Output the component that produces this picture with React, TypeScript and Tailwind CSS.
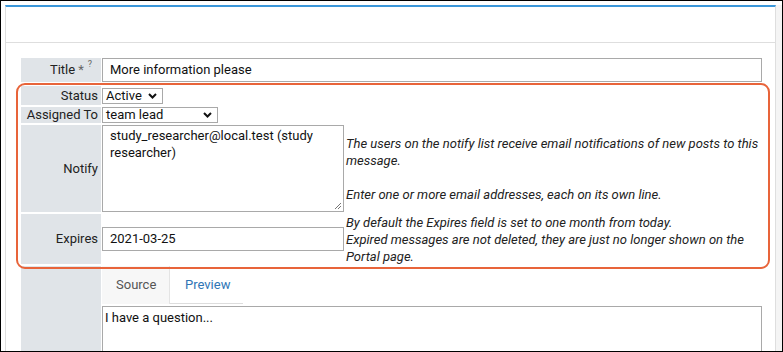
import { ReactNode } from 'react'

const Chevron = () => (
  <svg width="9" height="6" viewBox="0 0 9 6" className="shrink-0">
    <path d="M1 1 L4.5 4.5 L8 1" fill="none" stroke="#111" strokeWidth="2" />
  </svg>
)

const Select = ({ value, width }: { value: string; width: string }) => (
  <div
    className={`flex items-center justify-between h-[16px] border border-[#a9a9a9] bg-white pl-[3px] pr-[5px] ${width}`}
  >
    <span className="leading-[14px] text-[#111]">{value}</span>
    <Chevron />
  </div>
)

const Label = ({ children, className = '' }: { children: ReactNode; className?: string }) => (
  <div
    className={`w-[80px] shrink-0 bg-[#e0e4e8] flex items-center justify-end pr-[3px] text-[#222] ${className}`}
  >
    {children}
  </div>
)

export default function App() {
  return (
    <div
      className="relative w-[783px] h-[352px] overflow-hidden border border-black bg-white text-[13px]"
      style={{ fontFamily: 'Roboto, "Liberation Sans", sans-serif' }}
    >
      <div className="flex h-full pt-[4px] pl-[4px]">
        <div className="w-[771px] shrink-0 border-t-2 border-t-[#3a97da] border-x border-x-[#dedede]">
          <div className="h-[36px] border-b border-[#dedede]" />

          <div className="pl-[15px] pt-[15px] flex flex-col">
            {/* Title */}
            <div className="flex h-[24px] gap-[1px]">
              <Label className="pr-[9px]">
                <span>Title</span>
                <span className="ml-[3px] text-[#666]">*</span>
                <sup className="ml-[4px] text-[9px] text-[#666] -mt-[4px]">?</sup>
              </Label>
              <div className="w-[660px] border border-[#a9a9a9] flex items-center pl-[7px] text-[#111]">
                More information please
              </div>
            </div>

            {/* Status */}
            <div className="flex h-[19px] gap-[1px] mt-[4px]">
              <Label>Status</Label>
              <div className="flex items-end pb-[1px]">
                <Select value="Active" width="w-[61px]" />
              </div>
            </div>

            {/* Assigned To */}
            <div className="flex h-[16px] gap-[1px] mt-[2px]">
              <Label>Assigned To</Label>
              <Select value="team lead" width="w-[116px]" />
            </div>

            {/* Notify */}
            <div className="flex h-[87px] gap-[1px] mt-[2px]">
              <Label>Notify</Label>
              <div className="relative w-[242px] shrink-0 border border-[#a9a9a9] pl-[7px] pt-[1px] leading-[17px] text-[#111]">
                study_researcher@local.test (study researcher)
                <svg width="9" height="9" viewBox="0 0 9 9" className="absolute right-[1px] bottom-[1px]">
                  <path d="M8 2 L2 8 M8 5 L5 8" stroke="#777" strokeWidth="1" />
                </svg>
              </div>
              <div className="flex items-center italic text-[#222] leading-[17px] pl-[1px]">
                <div>
                  <div>The users on the notify list receive email notifications of new posts to this</div>
                  <div>message.</div>
                  <div>&nbsp;</div>
                  <div>Enter one or more email addresses, each on its own line.</div>
                </div>
              </div>
            </div>

            {/* Expires */}
            <div className="flex h-[50px] gap-[1px] mt-[2px]">
              <Label>Expires</Label>
              <div className="flex items-center">
                <div className="w-[242px] h-[24px] border border-[#a9a9a9] flex items-center pl-[7px] text-[#111]">
                  2021-03-25
                </div>
              </div>
              <div className="flex items-center italic text-[#222] leading-[17px] pl-[1px]">
                <div>
                  <div>By default the Expires field is set to one month from today.</div>
                  <div>Expired messages are not deleted, they are just no longer shown on the</div>
                  <div>Portal page.</div>
                </div>
              </div>
            </div>

            {/* Body */}
            <div className="flex gap-[1px] mt-[2px] h-[120px]">
              <div className="w-[80px] shrink-0 bg-[#e0e4e8]" />
              <div className="flex flex-col">
                <div className="flex h-[38px]">
                  <div className="w-[68px] bg-[#f7f7f7] border-r border-[#e4e4e4] flex items-center pl-[14px] text-[#555]">
                    Source
                  </div>
                  <div className="w-[73px] border-b border-[#dddddd] flex items-center pl-[15px] text-[#2f76b6]">
                    Preview
                  </div>
                </div>
                <div className="w-[660px] h-[80px] mt-[2px] border border-[#a9a9a9] pl-[2px] pt-[2px] leading-[17px] text-[#111]">
                  I have a question...
                </div>
              </div>
            </div>
          </div>
        </div>
        <div className="flex-1 bg-[#f4f4f4]" />
      </div>

      {/* annotation highlight */}
      <div className="absolute left-[15px] top-[82px] w-[754px] h-[186px] border-2 border-[#e8643a] rounded-[9px] pointer-events-none" />
    </div>
  )
}
